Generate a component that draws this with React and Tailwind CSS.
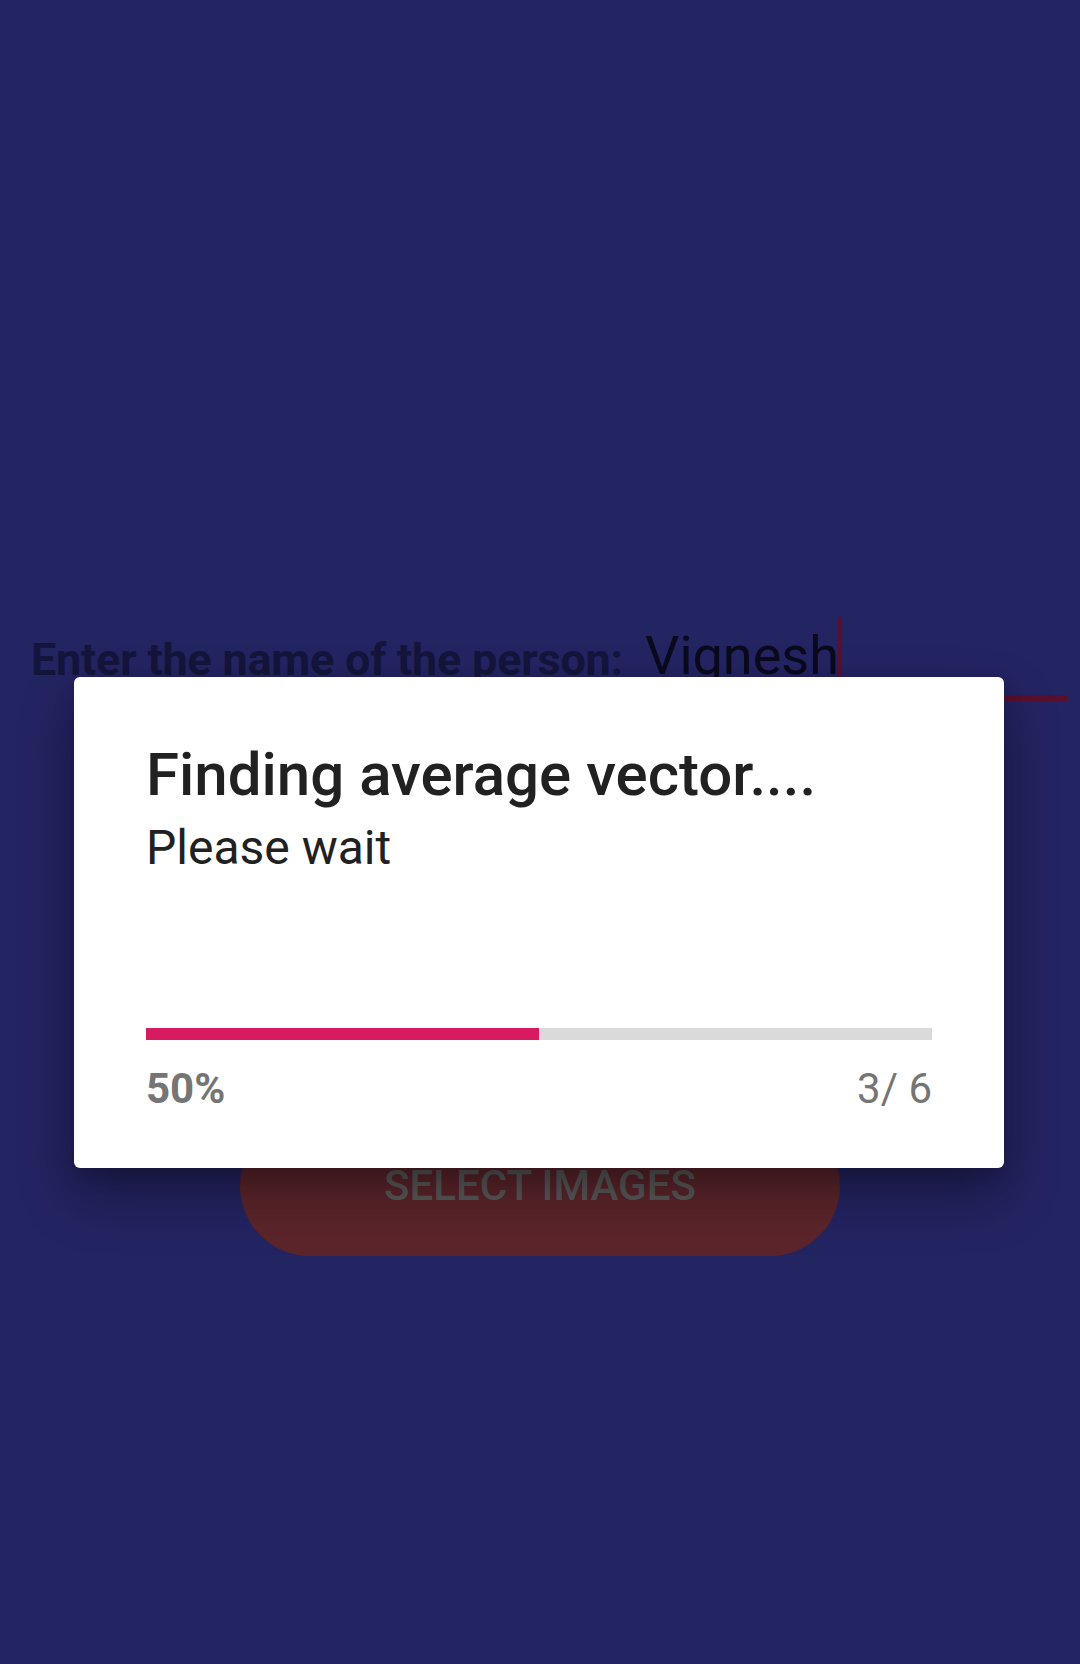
import React from 'react';

const ProgressDialog = ({ title, message, done, total }) => {
  const pct = Math.round((done / total) * 100);
  return (
    <div className="absolute left-[74px] top-[677px] w-[930px] rounded-[6px] bg-white px-[72px] pt-[68px] pb-[58px] shadow-[0_28px_56px_rgba(0,0,0,0.32),0_8px_20px_rgba(0,0,0,0.18)]">
      <h2 className="text-[60px] leading-none font-medium text-[#212121]">{title}</h2>
      <p className="mt-[19px] text-[48px] leading-none text-[#212121]">{message}</p>
      <div className="mt-[156px] h-[12px] w-full bg-[#dadada]">
        <div className="h-full bg-[#d81b60]" style={{ width: `${pct}%` }} />
      </div>
      <div className="mt-[28px] flex justify-between text-[42px] leading-none text-[#757575]">
        <span className="font-bold">{pct}%</span>
        <span>{done}/ {total}</span>
      </div>
    </div>
  );
};

export default function App() {
  return (
    <div className="relative h-[1664px] w-full overflow-hidden bg-[#232462] font-['Roboto',sans-serif]">
      <div className="flex items-start pt-[629px] pl-[31px] pr-[13px]">
        <span className="mt-[8px] text-[45px] leading-none font-bold tracking-[-0.005em] text-[#14153a] whitespace-nowrap">
          Enter the name of the person:
        </span>
        <div className="ml-[10px] flex flex-1 items-start border-b-[6px] border-[#5b0f2f] pb-[12px] pl-[12px]">
          <span className="text-[54px] leading-none text-[#0a0a1c]">Vignesh</span>
          <div className="-ml-[2px] -mt-[12px] h-[66px] w-[5px] bg-[#5b0f2f]" />
        </div>
      </div>

      <div className="mt-[415px] flex justify-center">
        <button className="flex h-[140px] w-[600px] items-center justify-center rounded-full bg-[#5c252b] text-[42px] leading-none font-medium text-[#5a5a5a]">
          SELECT IMAGES
        </button>
      </div>

      <ProgressDialog title="Finding average vector...." message="Please wait" done={3} total={6} />
    </div>
  );
}
